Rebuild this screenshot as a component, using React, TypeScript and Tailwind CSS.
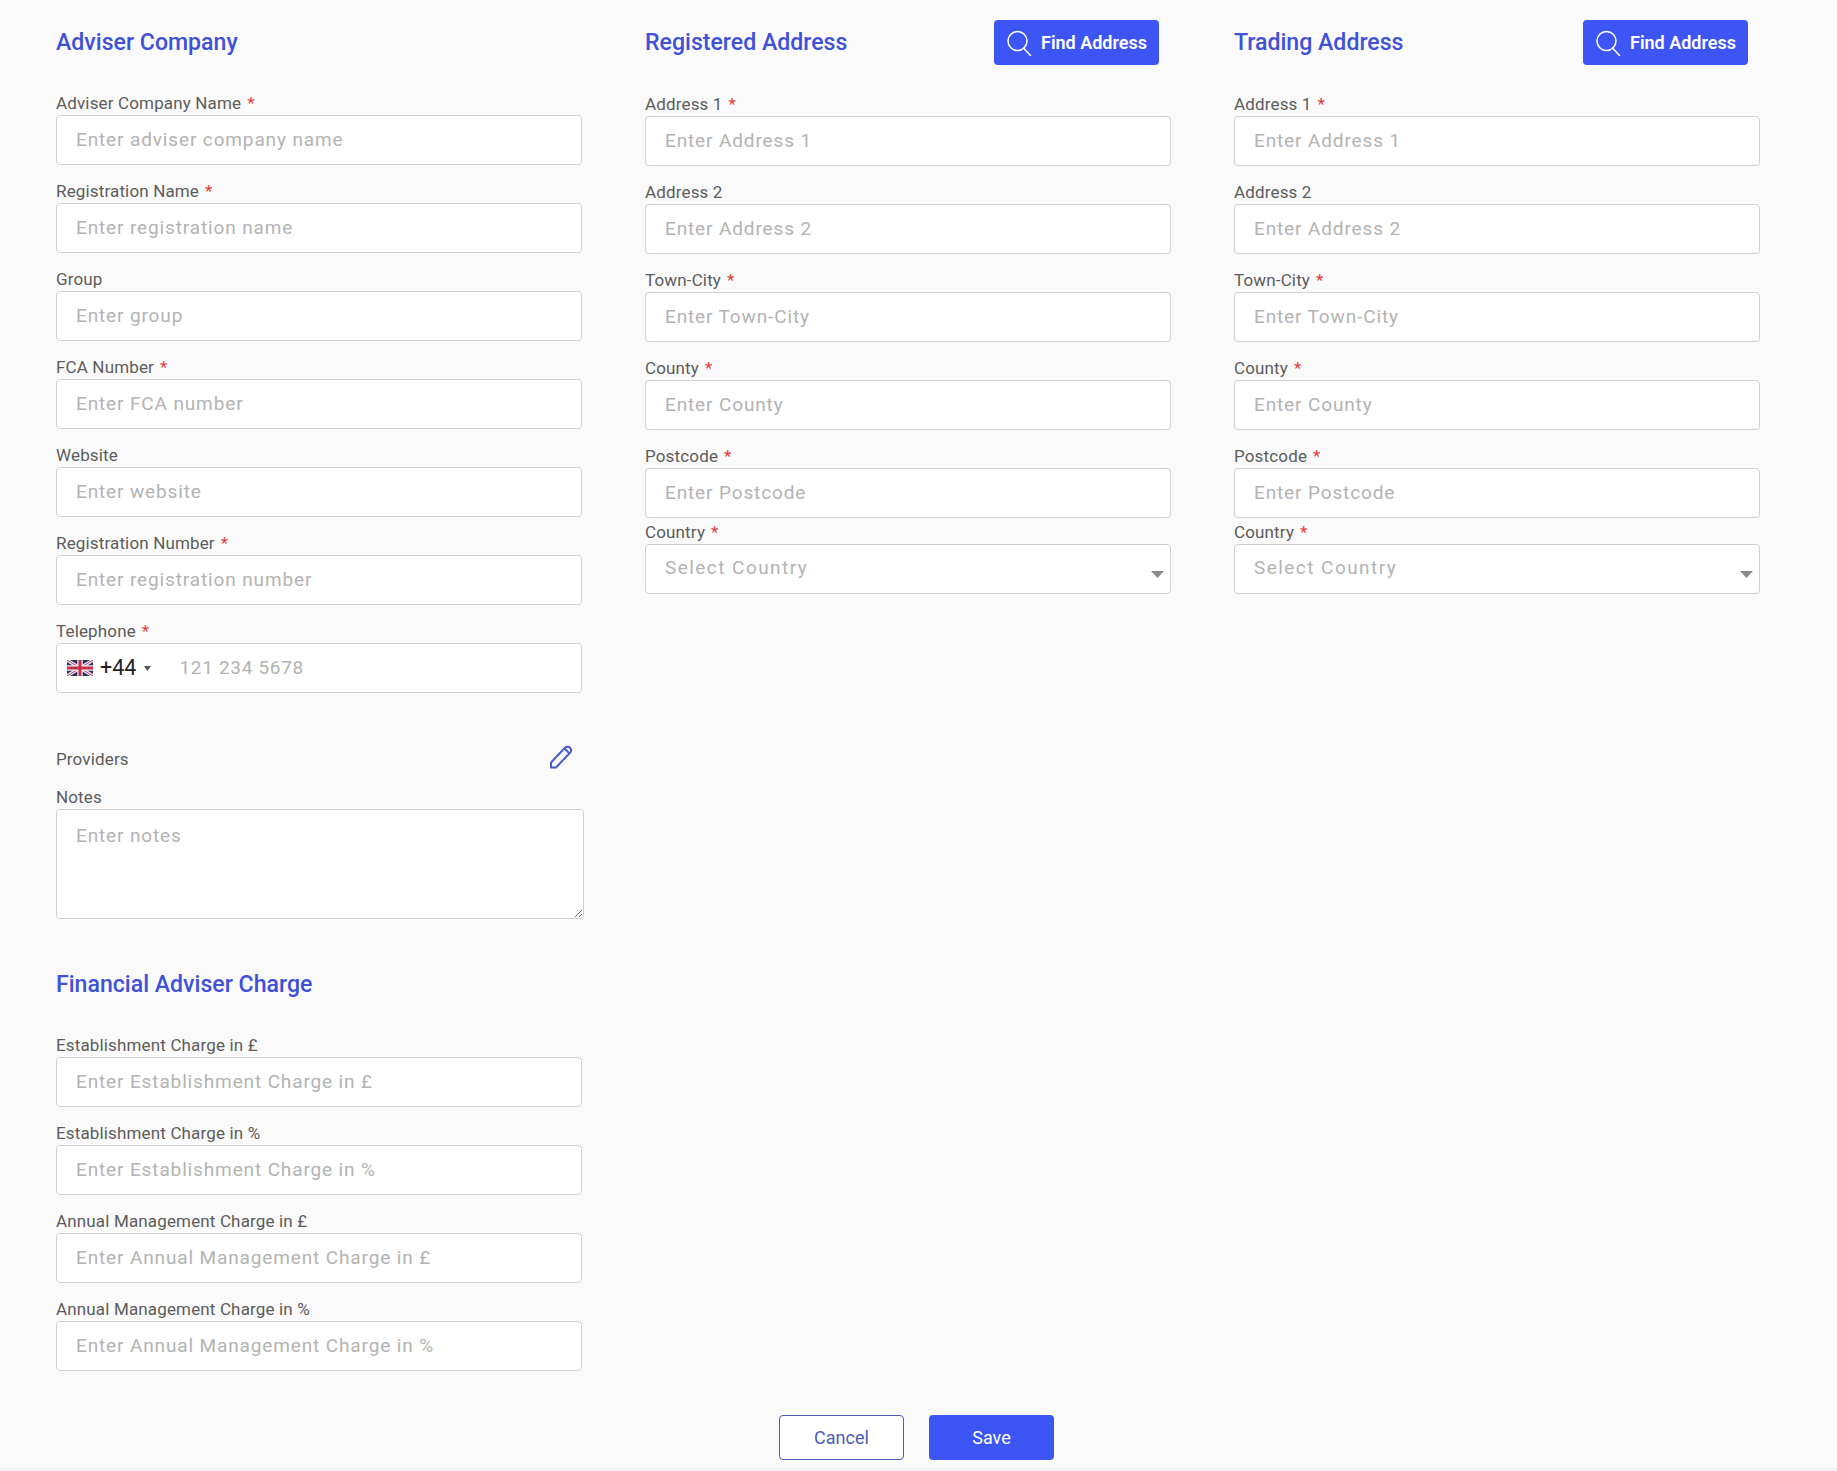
const inputCls =
  "block w-full h-[50px] rounded-[4px] border border-[#d0d0d4] bg-white pl-[19px] pr-3 pb-[1px] text-[19px] tracking-[0.87px] text-[#222] outline-none placeholder:text-[#b3b3b3]";

function Label({ text, required }: { text: string; required?: boolean }) {
  return (
    <label className="block h-[21px] text-[17px] leading-[19px] text-[#5c5c5c] tracking-[0.15px]">
      {text}
      {required && <span className="ml-[6px] text-[#e0403a]">*</span>}
    </label>
  );
}

function Field({ label, placeholder, required, tight }: { label: string; placeholder: string; required?: boolean; tight?: boolean }) {
  return (
    <div className={tight ? "mb-[5px]" : "mb-[17px]"}>
      <Label text={label} required={required} />
      <input className={inputCls} placeholder={placeholder} />
    </div>
  );
}

function Heading({ children }: { children: string }) {
  return <h2 className="text-[23.1px] font-medium leading-[45px] text-[#3f51d8]">{children}</h2>;
}

function SearchIcon() {
  return (
    <svg width="26" height="26" viewBox="0 0 26 26" fill="none" stroke="white" strokeWidth="1.5" strokeLinecap="round">
      <circle cx="11.5" cy="11" r="9.5" />
      <path d="M17.5 18l7 7.5" />
    </svg>
  );
}

function UkFlag() {
  return (
    <svg width="26" height="16" viewBox="0 0 26 16">
      <rect width="26" height="16" fill="#2a2f6e" />
      <path d="M0 0L26 16M26 0L0 16" stroke="#f2f2f4" strokeWidth="3.2" />
      <path d="M0 0L26 16M26 0L0 16" stroke="#c8304a" strokeWidth="1" />
      <path d="M13 0V16M0 8H26" stroke="#f2f2f4" strokeWidth="5.4" />
      <path d="M13 0V16M0 8H26" stroke="#c8304a" strokeWidth="3" />
    </svg>
  );
}

function AddressColumn({ title }: { title: string }) {
  return (
    <div className="w-[526px]">
      <div className="mb-[30px] flex h-[45px] items-center justify-between pr-[12px]">
        <Heading>{title}</Heading>
        <button className="flex h-[45px] w-[165px] items-center justify-center gap-[9px] rounded-[4px] bg-[#3d55f5] text-[18px] font-semibold text-white">
          <SearchIcon />
          Find Address
        </button>
      </div>
      <Field label="Address 1" placeholder="Enter Address 1" required />
      <Field label="Address 2" placeholder="Enter Address 2" />
      <Field label="Town-City" placeholder="Enter Town-City" required />
      <Field label="County" placeholder="Enter County" required />
      <Field label="Postcode" placeholder="Enter Postcode" required tight />
      <div>
        <Label text="Country" required />
        <div className="relative">
          <select className={`${inputCls} appearance-none text-[#b3b3b3] tracking-[1.45px]`} defaultValue="">
            <option value="">Select Country</option>
          </select>
          <svg className="absolute right-[7px] top-[27px]" width="13" height="7" viewBox="0 0 13 7">
            <path d="M0 0H13L6.5 7Z" fill="#8a8a8a" />
          </svg>
        </div>
      </div>
    </div>
  );
}

export default function App() {
  return (
    <div className="h-[1471px] border-b-[3px] border-[#f4f4f4] bg-[#fafafa] pt-[20px] pl-[56px] font-['Roboto',sans-serif]">
      <div className="flex gap-[63px]">
        <div className="w-[526px]">
          <div className="mb-[29px] h-[45px]">
            <Heading>Adviser Company</Heading>
          </div>
          <Field label="Adviser Company Name" placeholder="Enter adviser company name" required />
          <Field label="Registration Name" placeholder="Enter registration name" required />
          <Field label="Group" placeholder="Enter group" />
          <Field label="FCA Number" placeholder="Enter FCA number" required />
          <Field label="Website" placeholder="Enter website" />
          <Field label="Registration Number" placeholder="Enter registration number" required />
          <div>
            <Label text="Telephone" required />
            <div className="flex h-[50px] items-center rounded-[4px] border border-[#d0d0d4] bg-white pl-[10px]">
              <UkFlag />
              <span className="ml-[7px] text-[21.5px] text-[#222]">+44</span>
              <svg className="ml-[8px]" width="7" height="5" viewBox="0 0 7 5">
                <path d="M0 0H7L3.5 5Z" fill="#555" />
              </svg>
              <input className="ml-[28px] min-w-0 flex-1 bg-transparent text-[19px] tracking-[0.7px] outline-none placeholder:text-[#b3b3b3]" placeholder="121 234 5678" />
            </div>
          </div>
          <div className="mt-[51px] flex h-[32px] items-center justify-between pr-[9px]">
            <span className="text-[17px] text-[#5c5c5c] tracking-[0.15px]">Providers</span>
            <svg className="-mt-[6px]" width="24" height="24" viewBox="0 0 24 24" fill="none" stroke="#4a5cc8" strokeWidth="2" strokeLinejoin="round">
              <path d="M2 22.5L2 17.5L16 2.8C17.4 1.4 19.6 1.4 21 2.8C22.4 4.2 22.4 6.3 21 7.8L7 22.5L2 22.5Z" />
              <path d="M15.5 3.5L20.5 8.5" />
            </svg>
          </div>
          <div className="mt-[12px]">
            <Label text="Notes" />
            <textarea
              className="block h-[110px] w-[528px] rounded-[4px] border border-[#d0d0d4] bg-white px-[19px] py-[12px] text-[19px] tracking-[0.87px] outline-none placeholder:text-[#b3b3b3]"
              placeholder="Enter notes"
            />
          </div>
          <div className="mt-[43px] mb-[29px] h-[45px]">
            <Heading>Financial Adviser Charge</Heading>
          </div>
          <Field label="Establishment Charge in £" placeholder="Enter Establishment Charge in £" />
          <Field label="Establishment Charge in %" placeholder="Enter Establishment Charge in %" />
          <Field label="Annual Management Charge in £" placeholder="Enter Annual Management Charge in £" />
          <Field label="Annual Management Charge in %" placeholder="Enter Annual Management Charge in %" />
        </div>
        <AddressColumn title="Registered Address" />
        <AddressColumn title="Trading Address" />
      </div>
      <div className="mt-[27px] -ml-[56px] flex justify-center gap-[25px] pr-[4px]">
        <button className="h-[45px] w-[125px] rounded-[4px] border border-[#4a5cb8] bg-white text-[18px] text-[#4a5cb8]">Cancel</button>
        <button className="h-[45px] w-[125px] rounded-[4px] bg-[#3d55f5] text-[18px] text-white">Save</button>
      </div>
    </div>
  );
}
